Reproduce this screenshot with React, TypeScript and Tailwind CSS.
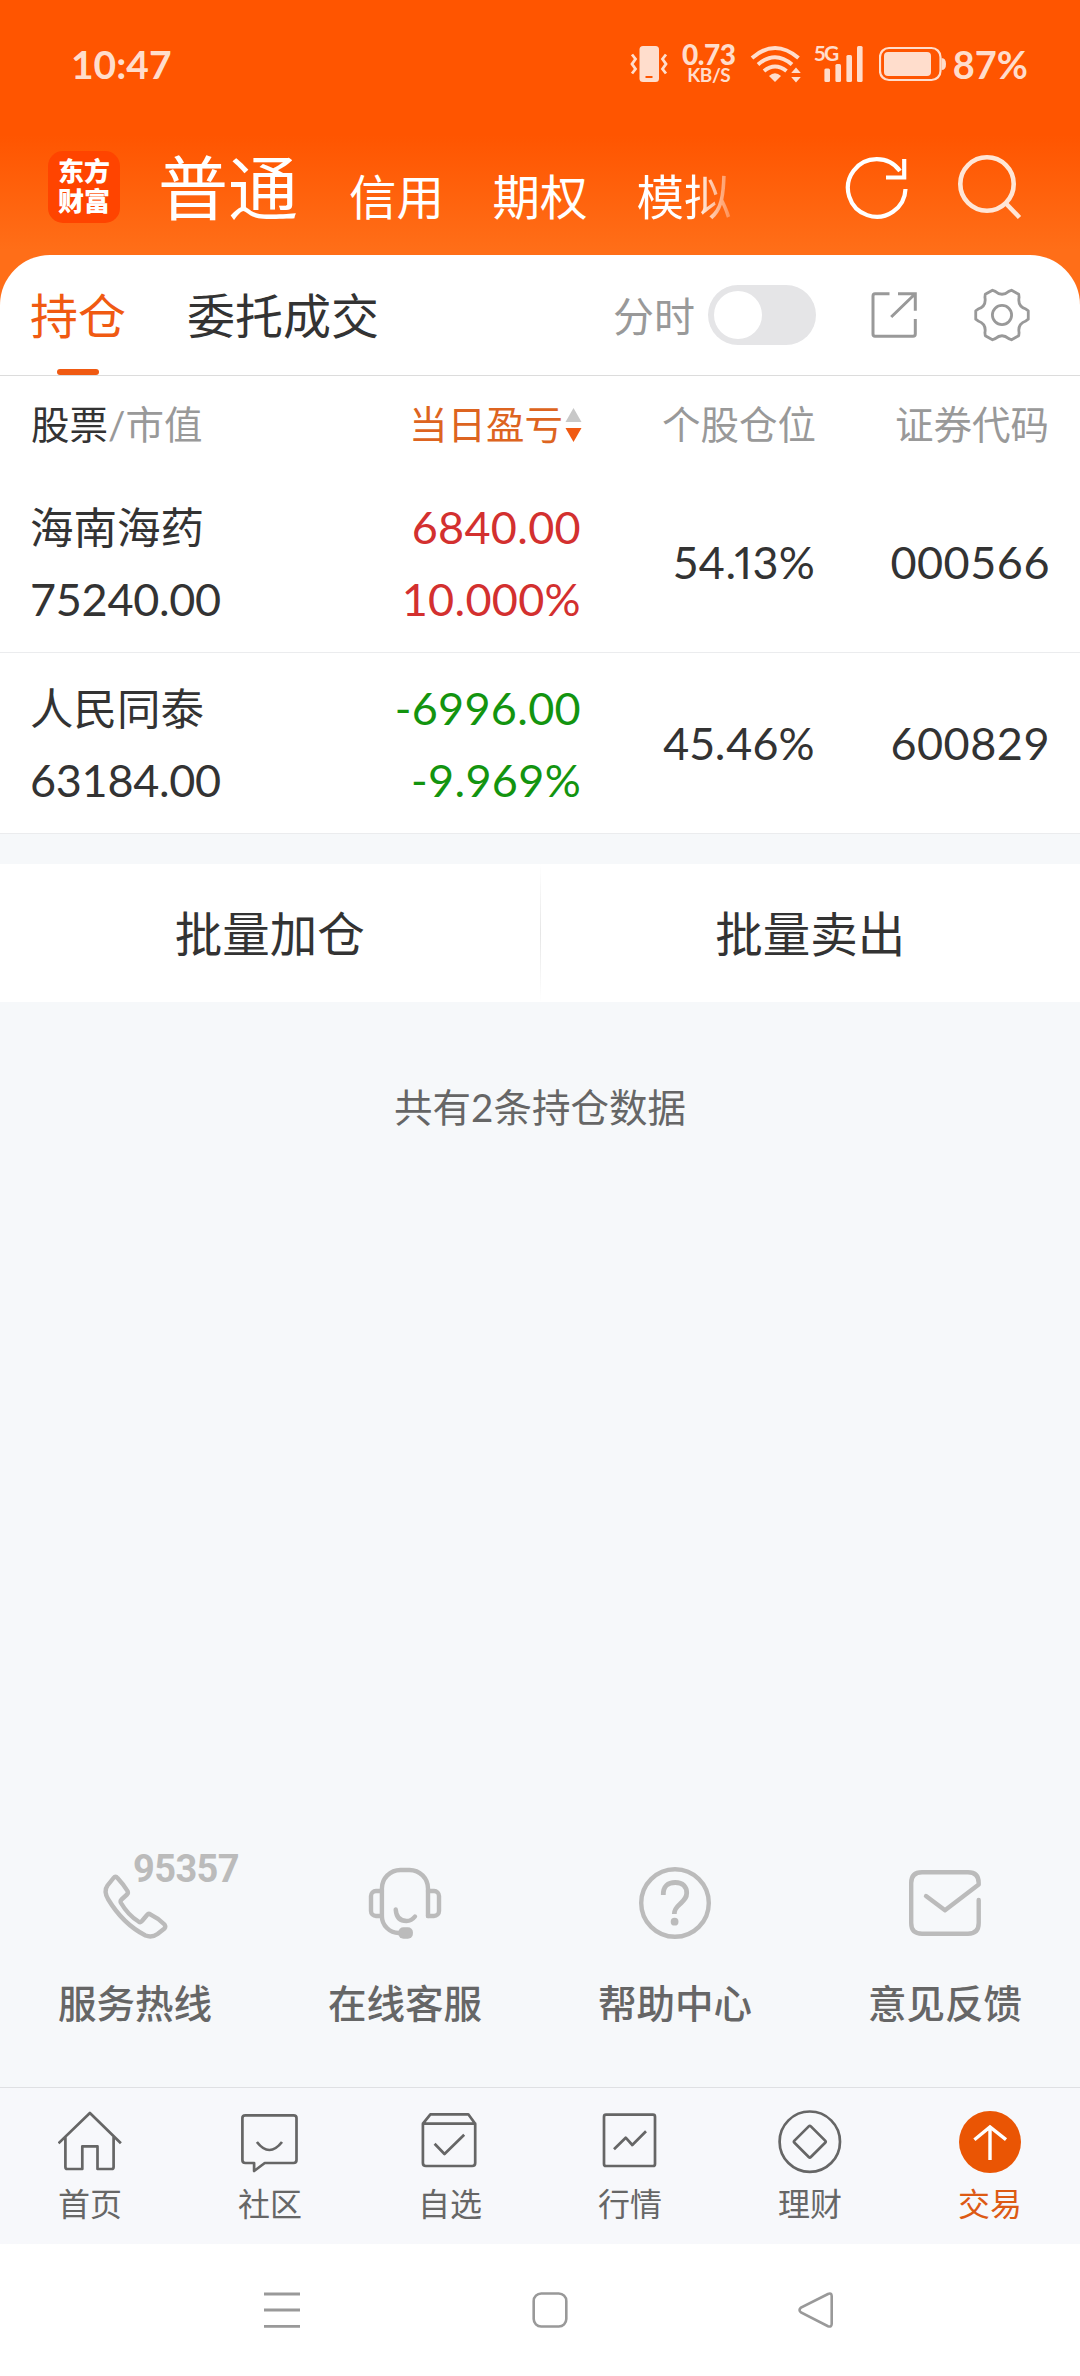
import type { ReactNode } from "react";

type Holding = {
  name: string;
  value: string;
  profit: string;
  rate: string;
  share: string;
  code: string;
  up: boolean;
};

const holdings: Holding[] = [
  { name: "海南海药", value: "75240.00", profit: "6840.00", rate: "10.000%", share: "54.13%", code: "000566", up: true },
  { name: "人民同泰", value: "63184.00", profit: "-6996.00", rate: "-9.969%", share: "45.46%", code: "600829", up: false },
];

// six-toothed gear outline around (30, 30)
function gearPath() {
  const pt = (deg: number, r: number) => {
    const a = (deg * Math.PI) / 180;
    return `${(30 + r * Math.cos(a)).toFixed(2)} ${(30 + r * Math.sin(a)).toFixed(2)}`;
  };
  let d = `M${pt(-9, 26.6)}`;
  for (let t = 0; t < 360; t += 60) {
    d += `L${pt(t + 9, 26.6)}L${pt(t + 14, 24.6)}Q${pt(t + 30, 17.8)} ${pt(t + 46, 24.6)}L${pt(t + 51, 26.6)}`;
  }
  return d + "Z";
}

function StatusBar() {
  return (
    <div className="flex h-[127px] items-center pl-[71px] pr-[52px] text-[#ffddcc] font-bold">
      <span className="text-[39px] leading-[48px]">10:47</span>
      <svg className="ml-auto" width="38" height="38" viewBox="0 0 38 38" fill="none" stroke="currentColor" strokeWidth="2.8">
        <rect x="9.5" y="1" width="19.5" height="36" rx="3.5" fill="currentColor" stroke="none" />
        <path d="M15.5 32H22.5" stroke="#ff5500" strokeWidth="2" />
        <path d="M2 9.500L5.500 14 2 19 5.500 24 2 28.500M36 9.500L32.500 14 36 19 32.500 24 36 28.500" />
      </svg>
      <div className="ml-[13px] flex w-[56px] flex-col items-center">
        <span className="text-[28px] font-black leading-[21px] tracking-[-0.5px]">0.73</span>
        <span className="mt-[2px] text-[19px] leading-[16px] tracking-[-0.4px]">KB/S</span>
      </div>
      <svg className="ml-[13px]" width="52" height="38" viewBox="0 0 52 38" fill="none" stroke="currentColor" strokeWidth="4">
        <path d="M2 13Q25 -7 48.500 13M8 19.500Q25 5 42 19.500M14 26Q25 17 36.500 26" />
        <path d="M19 31Q25 25.500 31 31L25 37Z" fill="currentColor" stroke="none" />
        <path d="M46 22.500L50.800 28H41.200ZM46 37.500L50.800 32H41.200Z" fill="currentColor" stroke="none" />
      </svg>
      <div className="relative ml-[12px] h-[38px] w-[50px]">
        <span className="absolute left-0 top-0 text-[21px] leading-[16px] tracking-[-2px]">5G</span>
        <svg width="50" height="38" viewBox="0 0 50 38" fill="currentColor">
          <rect x="10.400" y="23.500" width="5.600" height="13.500" rx="1.500" />
          <rect x="21.400" y="19" width="5.600" height="18" rx="1.500" />
          <rect x="32.400" y="10" width="5.600" height="27" rx="1.500" />
          <rect x="43" y="1" width="5.600" height="36" rx="1.500" />
        </svg>
      </div>
      <svg className="ml-[15px]" width="68" height="36" viewBox="0 0 68 36" fill="currentColor">
        <rect x="1" y="2" width="60.500" height="32" rx="9" fill="none" stroke="currentColor" strokeWidth="2.200" />
        <rect x="5" y="6" width="47" height="24" rx="4" />
        <path d="M62.500 12Q67 12 67 18T62.500 24Z" />
      </svg>
      <span className="ml-[6px] text-[38px] leading-[48px]">87%</span>
    </div>
  );
}

function AppHeader() {
  return (
    <div className="flex h-[128px] items-start text-white">
      <div className="ml-[48px] mt-[24px] flex h-[72px] w-[72px] flex-col items-center rounded-[15px] bg-[#ff4400] pt-[5px] text-[26px] font-black leading-[30px]">
        <span>东方</span>
        <span>财富</span>
      </div>
      <div className="ml-[38px] flex items-baseline pt-px">
        <span className="text-[70px] leading-[120px]">普通</span>
        <span className="ml-[51px] text-[47.5px]">信用</span>
        <span className="ml-[48.5px] text-[47.5px]">期权</span>
        <span className="ml-[49px] bg-linear-to-r from-white from-60% to-[#ff8a48] bg-clip-text text-[47.5px] text-transparent">模拟</span>
      </div>
      <svg className="ml-auto mt-[24px]" width="68" height="72" viewBox="0 0 68 72" fill="none" stroke="#fff" strokeWidth="4.200">
        <path d="M62.500 38A28.800 28.800 0 1 1 57 20M61.200 8V26.500H43" />
      </svg>
      <svg className="ml-[43px] mr-[54px] mt-[24px]" width="72" height="72" viewBox="0 0 72 72" fill="none" stroke="#ffe6d6" strokeWidth="4.600">
        <circle cx="33" cy="33" r="26.700" />
        <path d="M51.500 52L65.500 66.500" />
      </svg>
    </div>
  );
}

function PanelTabs() {
  return (
    <div className="flex h-[121px] items-center border-b border-[#dcdcdc] pl-[30px] pr-[48px]">
      <div className="relative flex h-full items-center pt-[2px] text-[48px] text-[#f05a12]">
        持仓
        <span className="absolute bottom-0 left-[27px] h-[6px] w-[42px] rounded-[3px] bg-[#f05a12]" />
      </div>
      <span className="ml-[61px] pt-[2px] text-[48px] text-[#333]">委托成交</span>
      <span className="ml-auto pt-[3px] text-[41px] text-[#999]">分时</span>
      <div className="ml-[13px] flex h-[60px] w-[108px] items-center rounded-full bg-[#e5e5e7] pl-[6px]">
        <div className="h-[48px] w-[48px] rounded-full bg-white" />
      </div>
      <svg className="ml-[54px]" width="48" height="48" viewBox="0 0 48 48" fill="none" stroke="#999" strokeWidth="3">
        <path d="M19.500 2.700H5Q3 2.700 3 5V43Q3 45.300 5 45.300H43Q45.300 45.300 45.300 43V28M28 2.700H45.300V19.700M45 3L21.200 26" />
      </svg>
      <svg className="ml-[54px]" width="60" height="60" viewBox="0 0 60 60" fill="none" stroke="#999" strokeWidth="2.800" strokeLinejoin="round">
        <path d={gearPath()} />
        <circle cx="30" cy="30" r="9.600" />
      </svg>
    </div>
  );
}

function HoldingsTable() {
  return (
    <div className="bg-white">
      <div className="flex h-[96px] items-center px-[31px] pt-[2px] text-[38.5px] text-[#999]">
        <div className="w-[300px]">
          <span className="text-[#333]">股票</span>/市值
        </div>
        <div className="flex flex-1 items-center justify-end text-[#dd6420]">
          当日盈亏
          <svg className="ml-[2px]" width="17" height="36" viewBox="0 0 17 36">
            <path d="M8.500 1L16.500 15H.5Z" fill="#c8c8c8" />
            <path d="M8.500 35L16.500 21H.5Z" fill="#f05a12" />
          </svg>
        </div>
        <div className="w-[234px] text-right">个股仓位</div>
        <div className="w-[233px] text-right">证券代码</div>
      </div>
      {holdings.map((h) => (
        <div key={h.code} className="flex h-[181px] items-center border-b border-[#ebecee] px-[30px] pt-[2px] text-[45px] text-[#333]">
          <div className="w-[300px]">
            <div className="h-[72px] text-[43.5px] leading-[72px]">{h.name}</div>
            <div className="h-[72px] leading-[72px] tracking-[-0.3px]">{h.value}</div>
          </div>
          <div className={h.up ? "flex-1 text-right tracking-[0.3px] text-[#d3302f]" : "flex-1 text-right tracking-[0.3px] text-[#13940f]"}>
            <div className="h-[72px] leading-[72px]">{h.profit}</div>
            <div className="h-[72px] leading-[72px]">{h.rate}</div>
          </div>
          <div className="w-[234px] text-right proportional-nums tracking-[0.3px]">{h.share}</div>
          <div className="w-[235px] text-right tracking-[0.5px]">{h.code}</div>
        </div>
      ))}
    </div>
  );
}

function Service({ label, note, children }: { label: string; note?: string; children: ReactNode }) {
  return (
    <div className="flex w-[270px] flex-col items-center">
      <div className="relative h-[72px] w-[72px]">
        <svg className="overflow-visible" width="72" height="72" viewBox="0 0 72 72" fill="none" stroke="#bbb" strokeWidth="4.400" strokeLinecap="round" strokeLinejoin="round">
          {children}
        </svg>
        {note && (
          <span className="absolute left-[34px] top-[-17px] font-['Roboto'] text-[38px] font-bold leading-[38px] tracking-[-0.6px] text-[#bbb]">{note}</span>
        )}
      </div>
      <span className="mt-[36px] text-[38.5px] font-medium leading-[56px] text-[#666]">{label}</span>
    </div>
  );
}

function Tab({ label, active, children }: { label: string; active?: boolean; children: ReactNode }) {
  return (
    <div className="flex w-[180px] flex-col items-center">
      <svg width="64" height="64" viewBox="0 0 64 64" fill="none" stroke="#666" strokeWidth="2.700" strokeLinejoin="round">
        {children}
      </svg>
      <span className={active ? "mt-[7px] text-[32px] leading-[46px] text-[#dd5a14]" : "mt-[7px] text-[32px] leading-[46px] text-[#666]"}>{label}</span>
    </div>
  );
}

export default function App() {
  return (
    <div className="flex h-[2376px] w-[1080px] flex-col overflow-hidden bg-[#f6f8fa] font-['Lato','Noto_Sans_CJK_SC',sans-serif]">
      <div className="bg-[linear-gradient(#ff5500_0,#ff5500_135px,#ff6e18_250px)]">
        <StatusBar />
        <AppHeader />
        <div className="overflow-hidden rounded-t-[50px] bg-white">
          <PanelTabs />
        </div>
      </div>
      <HoldingsTable />
      <div className="mt-[30px] flex h-[138px] items-center bg-white text-[47.5px] text-[#333]">
        <div className="flex-1 pt-[2px] text-center">批量加仓</div>
        <div className="h-full w-px bg-linear-to-b from-white via-[#e6e6e6] to-white" />
        <div className="flex-1 pt-[2px] text-center">批量卖出</div>
      </div>
      <div className="mt-[77px] text-center text-[38.5px] leading-[56px] text-[#666]">共有2条持仓数据</div>

      <div className="mt-auto flex pb-[56px]">
        <Service label="服务热线" note="95357">
          <path d="M14.500 11Q16.500 8.500 18.500 11Q25 18 28.500 24Q29.500 26 28 27.500L22.500 32.500Q21 34 22 36Q29 48 39.500 54.500Q41.500 56 43 54L48 48Q49.500 46 51.500 47.500Q59 51 65.500 57.500Q67 59.500 65.500 61.500L58.500 67Q53 71 46.500 68.500Q24 57 9 32Q4.500 24 8.500 18.500Z" />
        </Service>
        <Service label="在线客服">
          <path d="M59 49V21.500A18.500 18.500 0 0 0 40.500 3H31.400A18.500 18.500 0 0 0 12.900 21.500V49A17 17 0 0 0 30 66" />
          <path d="M12.900 24H7A5 5 0 0 0 2 29V44A5 5 0 0 0 7 49H12.900M59 24H65A5 5 0 0 1 70 29V44A5 5 0 0 1 65 49H59" />
          <path d="M26.700 42.500Q27.500 54 37.500 54Q42.500 54 46 49.500" />
          <rect x="29.400" y="60.300" width="14.500" height="11.400" rx="5" fill="#bbb" stroke="none" />
        </Service>
        <Service label="帮助中心">
          <circle cx="36" cy="36" r="33.800" />
          <path strokeWidth="4.800" strokeLinecap="butt" d="M24.300 28C24 19 29 15.500 36.300 15.500C44 15.500 47.700 20 47.700 26C47.700 31 45 33 41 37C36.500 41 35.300 43 35.300 47" />
          <circle cx="35.600" cy="54.700" r="3.900" fill="#bbb" stroke="none" />
        </Service>
        <Service label="意见反馈">
          <path d="M69.700 33V56Q69.700 66.700 59 66.700H13Q2.200 66.700 2.200 56V16Q2.200 5.300 13 5.300H59Q69.700 5.300 69.700 16V17.500L36 43.300L17 29" />
        </Service>
      </div>

      <div className="flex h-[157px] border-t border-[#dfe0e3] bg-[#f7f8fb] pt-[22px]">
        <Tab label="首页">
          <path d="M.5 33.300L31.900 3L62.900 33.300M7.400 27V57Q7.400 59 9.400 59H24.300V36.300H39.500V59H53.600Q55.600 59 55.600 57V27" />
        </Tab>
        <Tab label="社区">
          <path d="M7.400 5.300H55.500Q58.500 5.300 58.500 8V50Q58.500 53 55.500 53H26.800L16.100 61V53H7.400Q4.400 53 4.400 50V8Q4.400 5.300 7.400 5.300Z" />
          <path d="M18.900 32Q31.300 48 44 32" />
        </Tab>
        <Tab label="自选">
          <path d="M4.900 13.700H57.200V53Q57.200 56 54.200 56H7.900Q4.900 56 4.900 53ZM4.900 13.700L12.400 4.300H50.300L57.200 13.700" />
          <path d="M16.600 33.700L26.500 44L46.200 24.700" />
        </Tab>
        <Tab label="行情">
          <rect x="6" y="4.700" width="51" height="51.300" rx="2" />
          <path d="M16 39.300L27.700 27.700L34.300 35L48 21.300" />
        </Tab>
        <Tab label="理财">
          <circle cx="31.800" cy="31.700" r="30.200" />
          <rect x="20.200" y="20.100" width="23.200" height="23.200" rx="1.500" transform="rotate(45 31.800 31.700)" />
        </Tab>
        <Tab label="交易" active>
          <circle cx="32" cy="32" r="31" fill="#ea5504" stroke="none" />
          <path stroke="#fff" strokeWidth="3.400" strokeLinejoin="miter" d="M32 50V17M16.400 29.700L32 17L48 29.700" />
        </Tab>
      </div>

      <div className="flex h-[132px] items-center bg-white">
        <svg className="ml-[264px]" width="36" height="36" viewBox="0 0 36 36" fill="none" stroke="#999" strokeWidth="2.800">
          <path d="M0 2H36M0 18H36M0 34.300H36" />
        </svg>
        <svg className="ml-[232px]" width="36" height="36" viewBox="0 0 36 36" fill="none" stroke="#999" strokeWidth="2.600">
          <rect x="1.700" y="1.500" width="32.600" height="33" rx="7.500" />
        </svg>
        <svg className="ml-[229px]" width="38" height="36" viewBox="0 0 38 36" fill="none" stroke="#999" strokeWidth="2.600">
          <path d="M31 2Q34.500 .5 34.700 4V32Q34.500 35.500 31 34.200L4 20.500Q1 18.200 4 15.500Z" />
        </svg>
      </div>
    </div>
  );
}
